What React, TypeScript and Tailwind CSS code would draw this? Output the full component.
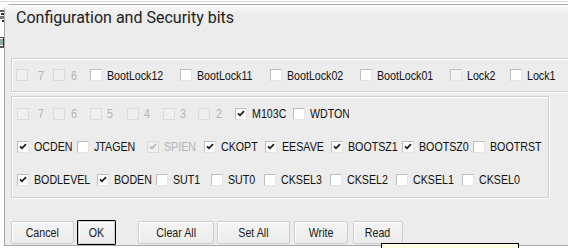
import React from "react";

type Item = {
  label: string;
  w: string;
  checked?: boolean;
  disabled?: boolean;
  gap?: string;
  grey?: boolean;
};

const LBL = "font-['Liberation_Sans',Arial,sans-serif] text-[13px] leading-[15px]";

function Check({ checked, disabled, grey }: { checked?: boolean; disabled?: boolean; grey?: boolean }) {
  const cls = disabled
    ? "border-[#dadada] bg-[#efefef]"
    : grey
    ? "border-t-[#c0c0c0] border-l-[#c0c0c0] border-r-[#e4e4e4] border-b-[#e4e4e4] bg-[#f3f3f3]"
    : "border-t-[#bdbdbd] border-l-[#bdbdbd] border-r-[#e4e4e4] border-b-[#e4e4e4] bg-white";
  return (
    <span className={`flex items-center justify-center w-[12px] h-[12px] shrink-0 border ${cls}`}>
      {checked && (
        <svg width="8" height="7" viewBox="0 0 8 7">
          <path
            d="M1 3.3 L3 5.3 L7 1.1"
            fill="none"
            stroke={disabled ? "#b8b8b8" : "#1c1c1c"}
            strokeWidth="1.8"
          />
        </svg>
      )}
    </span>
  );
}

function ItemView({ it }: { it: Item }) {
  return (
    <div className={`flex items-center shrink-0 overflow-hidden ${it.w}`}>
      <Check checked={it.checked} disabled={it.disabled} grey={it.grey} />
      <span
        className={`${it.gap ?? "ml-[5px]"} inline-block origin-left scale-x-[0.82] whitespace-nowrap ${
          it.disabled ? "text-[#b3b3b3]" : "text-[#111]"
        }`}
      >
        {it.label}
      </span>
    </div>
  );
}

function Row({ items }: { items: Item[] }) {
  return (
    <div className="flex items-center h-[33px] pl-[5px]">
      {items.map((it, i) => (
        <ItemView key={i} it={it} />
      ))}
    </div>
  );
}

const lockRow: Item[] = [
  { label: "7", w: "w-[37px]", disabled: true, gap: "ml-[10px]" },
  { label: "6", w: "w-[37px]", disabled: true, gap: "ml-[6px]" },
  { label: "BootLock12", w: "w-[90px]" },
  { label: "BootLock11", w: "w-[90px]" },
  { label: "BootLock02", w: "w-[90px]" },
  { label: "BootLock01", w: "w-[90px]" },
  { label: "Lock2", w: "w-[60px]", grey: true },
  { label: "Lock1", w: "w-[60px]" },
];

const rowA: Item[] = [
  { label: "7", w: "w-[36px]", disabled: true, gap: "ml-[9px]" },
  { label: "6", w: "w-[37px]", disabled: true, gap: "ml-[6px]" },
  { label: "5", w: "w-[37px]", disabled: true },
  { label: "4", w: "w-[36px]", disabled: true },
  { label: "3", w: "w-[35px]", disabled: true },
  { label: "2", w: "w-[37px]", disabled: true, gap: "ml-[6px]" },
  { label: "M103C", w: "w-[58px]", checked: true },
  { label: "WDTON", w: "w-[56px]" },
];

const rowB: Item[] = [
  { label: "OCDEN", w: "w-[60px]", checked: true },
  { label: "JTAGEN", w: "w-[70px]" },
  { label: "SPIEN", w: "w-[57px]", checked: true, disabled: true },
  { label: "CKOPT", w: "w-[61px]", checked: true },
  { label: "EESAVE", w: "w-[66px]", checked: true },
  { label: "BOOTSZ1", w: "w-[71px]", checked: true },
  { label: "BOOTSZ0", w: "w-[71px]", checked: true },
  { label: "BOOTRST", w: "w-[72px]" },
];

const rowC: Item[] = [
  { label: "BODLEVEL", w: "w-[80px]", checked: true },
  { label: "BODEN", w: "w-[59px]", checked: true },
  { label: "SUT1", w: "w-[55px]" },
  { label: "SUT0", w: "w-[53px]" },
  { label: "CKSEL3", w: "w-[66px]" },
  { label: "CKSEL2", w: "w-[66px]" },
  { label: "CKSEL1", w: "w-[66px]" },
  { label: "CKSEL0", w: "w-[60px]" },
];

function Btn({ label, cls }: { label: string; cls: string }) {
  return (
    <div
      className={`h-[23px] flex items-center justify-center shrink-0 rounded-[2px] border border-[#cdcdcd] bg-[linear-gradient(to_bottom,#f4f4f4,#ebebeb)] shadow-[inset_1px_1px_0_#ffffff] text-[#1a1a1a] ${cls}`}
    >
      <span className="inline-block origin-center scale-x-[0.82] whitespace-nowrap">{label}</span>
    </div>
  );
}

export default function App() {
  return (
    <div className={`w-[568px] h-[248px] overflow-hidden bg-white relative flex flex-col ${LBL}`}>
      <div className="h-[1px] bg-white" />
      <div className="h-[1px] bg-[#d9d9d9]" />
      <div className="h-[2px] bg-white" />
      <div className="flex flex-1">
        {/* desktop strip */}
        <div className="w-[4px] shrink-0 bg-white">
          <svg width="4" height="60" viewBox="0 0 4 60">
            <rect x="0" y="6" width="4" height="2" fill="#5a5a5a" />
            <rect x="1" y="9" width="3" height="2" fill="#2a2a2a" />
            <rect x="0" y="12" width="4" height="3" fill="#777" />
            <rect x="2" y="16" width="2" height="2" fill="#333" />
            <rect x="0" y="33" width="4" height="1" fill="#444" />
            <rect x="0" y="35" width="3" height="6" fill="#8fa9a8" />
            <rect x="3" y="34" width="1" height="8" fill="#333" />
            <rect x="0" y="42" width="4" height="2" fill="#555" />
          </svg>
        </div>
        {/* dialog */}
        <div className="flex-1 h-[242px] border-l border-t border-b border-[#a8a8a8] rounded-tl-[6px] bg-[#ececec] flex flex-col">
          <div className="h-[53px] pl-[11px] pt-[2px] bg-[linear-gradient(to_bottom,#fbfbfb,#ececec_10px)]">
            <div className="font-['Roboto',sans-serif] text-[16px] leading-[21px] text-[#222]">
              Configuration and Security bits
            </div>
          </div>
          <div className="pl-[6px] flex flex-col">
            <div className="h-[34px] w-[600px] border border-[#d0d0d0] shadow-[inset_1px_1px_0_#ffffff,1px_1px_0_#ffffff] flex flex-col justify-center">
              <div className="flex items-center h-[32px] pl-[4px]">
                {lockRow.map((it, i) => (
                  <ItemView key={i} it={it} />
                ))}
              </div>
            </div>
            <div className="mt-[4px] h-[102px] w-[538px] border border-[#d0d0d0] shadow-[inset_1px_1px_0_#ffffff,1px_1px_0_#ffffff]">
              <Row items={rowA} />
              <Row items={rowB} />
              <Row items={rowC} />
            </div>
            <div className="mt-[22px] h-[25px] flex items-center">
              <Btn label="Cancel" cls="w-[63px]" />
              <div className="ml-[3px] border border-black rounded-[1px] shrink-0">
                <Btn label="OK" cls="w-[37px]" />
              </div>
              <Btn label="Clear All" cls="w-[76px] ml-[22px]" />
              <Btn label="Set All" cls="w-[73px] ml-[3px]" />
              <Btn label="Write" cls="w-[54px] ml-[4px]" />
              <Btn label="Read" cls="w-[50px] ml-[5px]" />
            </div>
          </div>
        </div>
      </div>
      {/* tooltip */}
      <div className="absolute left-[381px] top-[243px] w-[138px] h-[22px] bg-[#ffffe1] border border-black text-[12px] leading-[14px] pl-[5px] pt-[2px] text-black whitespace-nowrap">
        Reads all fuse bits from device
      </div>
    </div>
  );
}
